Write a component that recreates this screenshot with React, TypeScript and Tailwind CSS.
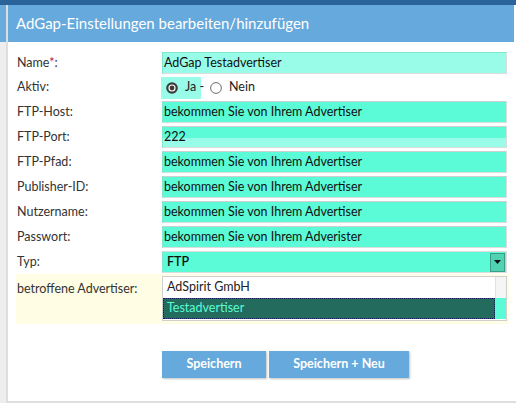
import { ReactNode } from 'react';

const font = { fontFamily: 'Lato, "Open Sans", sans-serif' };

function Row({ label, children, required }: { label: string; children: ReactNode; required?: boolean }) {
  return (
    <div className="flex items-center">
      <label className="w-[146px] pl-[1px] text-[12.5px] text-[#333]">
        {label}
        {required && <span className="text-[#c8102e]">*</span>}:
      </label>
      {children}
    </div>
  );
}

function TextInput({ value, tone = 'strong' }: { value: string; tone?: 'strong' | 'light' | 'split' }) {
  const bg =
    tone === 'light'
      ? 'bg-[#98fce8] border-t-[#7fe6d0]'
      : tone === 'split'
        ? 'bg-[linear-gradient(#5afbd6_0%,#5afbd6_55%,#98fce8_55%)] border-t-[#cfcfcf]'
        : 'bg-[#5afbd6] border-t-[#cfcfcf]';
  return (
    <div
      className={`w-[345px] h-[22px] border border-[#dcdcdc] border-l-[#7fe6d0] flex items-center pl-[1px] text-[12.5px] text-[#111] ${bg}`}
    >
      {value}
    </div>
  );
}

function Radio({ checked }: { checked?: boolean }) {
  return (
    <svg width="12" height="12" viewBox="0 0 12 12" className="shrink-0">
      {checked ? (
        <>
          <circle cx="6" cy="6" r="5.8" fill="#3b3b3b" />
          <circle cx="6" cy="6" r="3.6" fill="#ffffff" />
          <circle cx="6" cy="6" r="2.4" fill="#3b3b3b" />
        </>
      ) : (
        <circle cx="6" cy="6" r="5.4" fill="#fff" stroke="#6b6b6b" strokeWidth="1" />
      )}
    </svg>
  );
}

export default function App() {
  const provided = 'bekommen Sie von Ihrem Advertiser';

  return (
    <div className="w-[516px] h-[403px] overflow-hidden bg-white flex flex-col" style={font}>
      {/* top toolbar edge */}
      <div className="h-[5px] bg-[#2a6399] shrink-0" />

      <div className="flex flex-1">
        {/* page background peeking out on the left */}
        <div className="w-[6px] flex flex-col">
          <div className="h-[37px] bg-[#6aabdd]" />
          <div className="flex-1 bg-[#eeeeee]" />
        </div>

        <div className="flex-1 flex flex-col border-l-2 border-[#dedede]">
          <div className="h-[37px] mr-[2px] bg-[#66a9dc] flex items-center pl-[8px] text-white text-[15px]">
            AdGap-Einstellungen bearbeiten/hinzufügen
          </div>

          <div className="flex-1 flex flex-col border-b-2 border-[#dedede]">
            <div className="pl-[8px] pt-[10px] flex flex-col gap-[3px] w-[501px]">
              <Row label="Name" required>
                <TextInput value="AdGap Testadvertiser" tone="light" />
              </Row>

              <Row label="Aktiv">
                <div className="h-[21px] flex items-center text-[12.5px] text-[#222] whitespace-nowrap">
                  <div className="h-[22px] w-[40px] -ml-[1px] bg-[#98fce8] flex items-center pl-[5px] gap-[7px]">
                    <Radio checked />
                    <span>Ja -</span>
                  </div>
                  <div className="flex items-center gap-[7px] ml-[9px]">
                    <Radio />
                    <span>Nein</span>
                  </div>
                </div>
              </Row>

              <Row label="FTP-Host">
                <TextInput value={provided} />
              </Row>
              <Row label="FTP-Port">
                <TextInput value="222" tone="split" />
              </Row>
              <Row label="FTP-Pfad">
                <TextInput value={provided} />
              </Row>
              <Row label="Publisher-ID">
                <TextInput value={provided} />
              </Row>
              <Row label="Nutzername">
                <TextInput value={provided} />
              </Row>
              <Row label="Passwort">
                <TextInput value="bekommen Sie von Ihrem Adverister" />
              </Row>

              <Row label="Typ">
                <div className="w-[345px] h-[22px] border border-[#dcdcdc] border-l-[#7fe6d0] bg-[#5afbd6] flex items-center justify-between pl-[4px] pr-[1px]">
                  <span className="text-[12.5px] font-semibold text-[#111]">FTP</span>
                  <div className="w-[15px] h-[19px] bg-[#4fd3b2] border border-[#3a9d85] flex items-center justify-center">
                    <svg width="7" height="4" viewBox="0 0 7 4">
                      <path d="M0 0h7L3.5 4z" fill="#111" />
                    </svg>
                  </div>
                </div>
              </Row>

              {/* affected advertisers, multi-select list */}
              <div className="flex items-start bg-[#fffde3] -mt-[2px] pt-[2px] pb-[3px] w-[493px]">
                <label className="w-[146px] pl-[1px] pt-[4px] text-[12.5px] text-[#333]">betroffene Advertiser:</label>
                <div className="w-[345px] h-[45px] border border-[#cfcfcf] bg-white relative flex flex-col">
                  <div className="h-[21px] flex items-center pl-[4px] text-[12.5px] text-[#222] mr-[12px]">AdSpirit GmbH</div>
                  <div className="h-[21px] flex">
                    <div className="flex-1 bg-[#236b5c] border border-dotted border-[#1a1a5c] flex items-center pl-[3px] text-[12.5px] text-[#5afbd6]">
                      Testadvertiser
                    </div>
                    <div className="w-[11px] bg-[#5afbd6]" />
                  </div>
                  <div className="absolute right-0 top-0 w-[11px] h-[21px] bg-[#f5f5f5] border-l border-[#e2e2e2]" />
                </div>
              </div>
            </div>

            <div className="flex gap-[3px] pl-[154px] mt-[27px]">
              <button className="w-[104px] h-[27px] bg-[#66a9dc] text-white text-[12.5px] font-bold shadow-[1px_1px_2px_rgba(0,0,0,0.25)]">
                Speichern
              </button>
              <button className="w-[140px] h-[27px] bg-[#66a9dc] text-white text-[12.5px] font-bold shadow-[1px_1px_2px_rgba(0,0,0,0.25)]">
                Speichern + Neu
              </button>
            </div>
          </div>
        </div>
      </div>
    </div>
  );
}
